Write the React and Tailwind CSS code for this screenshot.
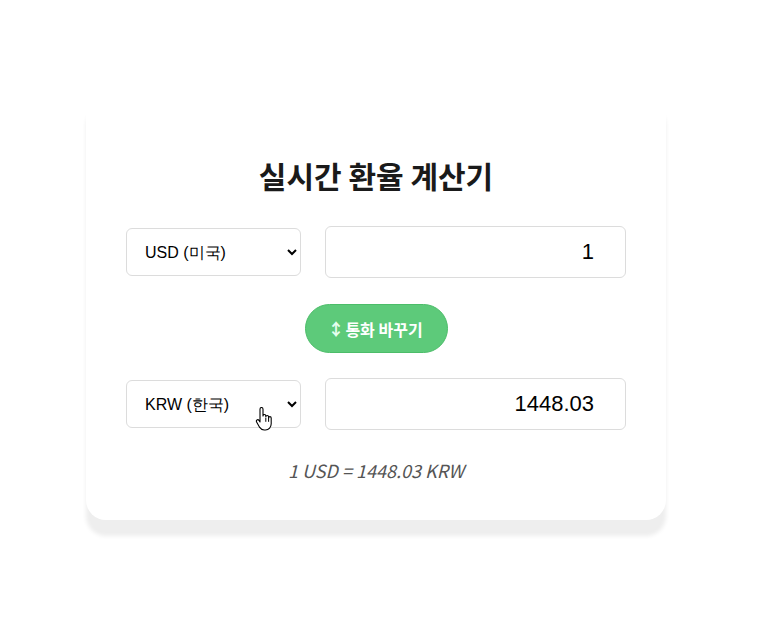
import React, { useState } from 'react';

const RATES = { USD: 1, KRW: 1448.03 };

const CurrencyRow = ({ value, onChange, amount, onAmount, hand }) => (
    <div className="flex items-center gap-[24px]">
        <div className="relative shrink-0 w-[175px] h-[48px]">
            <select
                value={value} onChange={onChange}
                className="w-full h-full bg-white border border-[#dcdcdc] rounded-[6px] pl-[14px] pr-[2px] text-[16px] text-black font-['Liberation_Sans',sans-serif] outline-none"
            >
                <option value="USD">USD (미국)</option>
                <option value="KRW">KRW (한국)</option>
            </select>
            {hand && (
                <svg className="absolute left-[129px] top-[27px] w-[18px] h-[24px] pointer-events-none" viewBox="0 0 18 24">
                    <path d="M5 2.2c0-1 .7-1.7 1.5-1.7S8 1.2 8 2.2V9c0-.9.6-1.5 1.4-1.5s1.4.6 1.4 1.5v1c0-.9.6-1.5 1.4-1.5s1.4.6 1.4 1.5v1c0-.9.6-1.4 1.3-1.4s1.3.6 1.3 1.4v5.8c0 3.2-2.3 6.2-5.7 6.2H9.2c-2 0-3.4-1-4.5-2.6L1.6 15c-.5-.8-.3-1.7.4-2.1.7-.4 1.5-.2 2 .5L5 15V2.2z" fill="#fff" stroke="#000" strokeWidth="1.1" strokeLinejoin="round" />
                    <path d="M10.8 11v3.8M13.6 11v3.8" stroke="#000" strokeWidth="1" />
                </svg>
            )}
        </div>
        <input
            type="text" value={amount} onChange={onAmount}
            className="flex-1 min-w-0 h-[52px] border border-[#dcdcdc] rounded-[6px] bg-white text-right pr-[31px] text-[22px] text-black font-['Liberation_Sans',sans-serif] outline-none"
        />
    </div>
);

const App = () => {
    const [from, setFrom] = useState('USD');
    const [to, setTo] = useState('KRW');
    const [amount, setAmount] = useState('1');

    const result = ((parseFloat(amount) || 0) * RATES[to] / RATES[from]).toFixed(2);
    const rate = (RATES[to] / RATES[from]).toFixed(2);

    const swap = () => {
        setFrom(to);
        setTo(from);
    };

    return (
        <div className="w-[758px] h-[620px] bg-white pl-[86px] pt-[90px]">
            <div className="w-[580px] bg-white rounded-[20px] shadow-[0_16px_4px_#eeeeee] px-[40px] pt-[63px] pb-[38px] flex flex-col">
                <h1 className="text-center text-[30px] leading-[44px] font-bold text-[#1a1a1a] font-['Noto_Sans_CJK_KR',sans-serif] mb-[29px]">
                    실시간 환율 계산기
                </h1>

                <CurrencyRow
                    value={from} onChange={(e) => setFrom(e.target.value)}
                    amount={amount} onAmount={(e) => setAmount(e.target.value)}
                />

                <div className="flex justify-center mt-[26px] mb-[25px]">
                    <button
                        onClick={swap}
                        className="w-[143px] h-[49px] rounded-full bg-[#5dca7a] border border-[#4cbd69] text-white text-[16px] font-bold font-['Noto_Sans_CJK_KR',sans-serif] flex items-center justify-center gap-[1px] pr-[2px]"
                    >
                        <span className="text-[#e6fff0] text-[17px]">↕</span>
                        <span>통화 바꾸기</span>
                    </button>
                </div>

                <CurrencyRow
                    value={to} onChange={(e) => setTo(e.target.value)}
                    amount={result} onAmount={() => {}}
                    hand
                />

                <p className="text-center mt-[28px] text-[18px] leading-[24px] italic text-[#555] font-['Noto_Sans_CJK_KR',sans-serif]">
                    1 {from} = {rate} {to}
                </p>
            </div>
        </div>
    );
};

export default App;
